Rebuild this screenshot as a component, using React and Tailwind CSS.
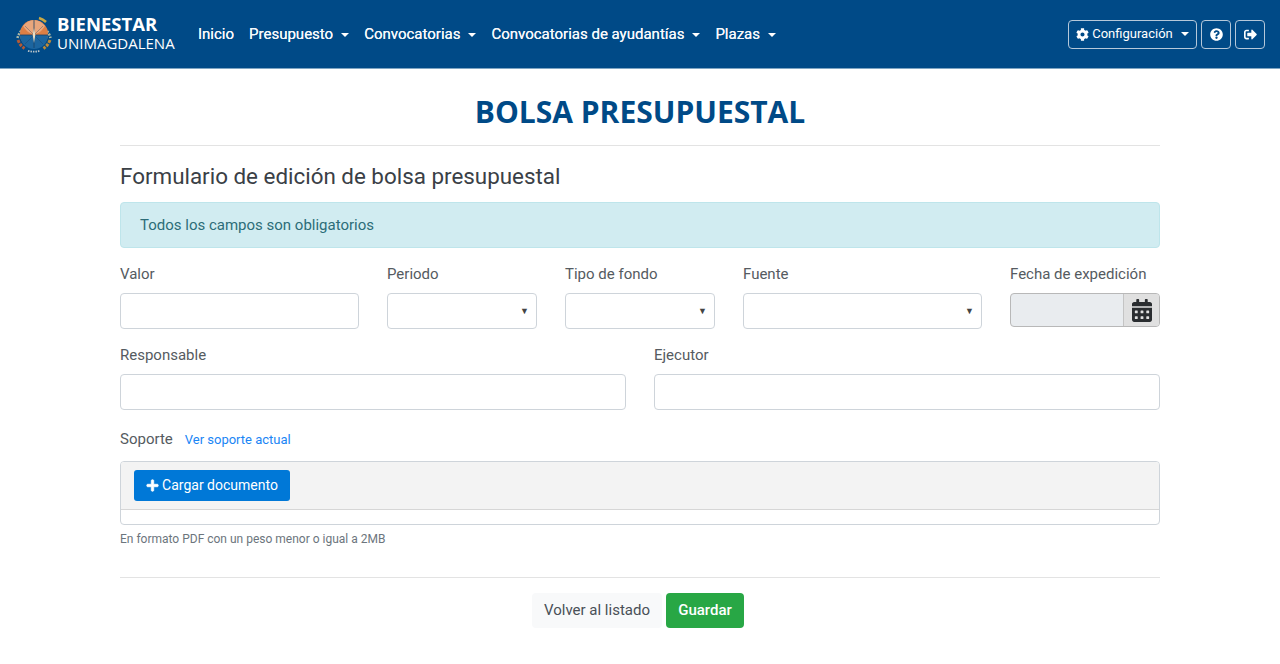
import React from "react";
import { FaCog, FaQuestionCircle, FaCalendarAlt, FaPlus, FaSignOutAlt } from "react-icons/fa";

function Logo() {
  return (
    <svg width="38" height="38" viewBox="0 0 38 38" className="shrink-0">
      <path d="M2.500 23A17 17 0 0 1 35.500 23" fill="none" stroke="#a9b5a4" strokeWidth="2.600" strokeDasharray="2 1.100" />
      <path d="M24 3a17 17 0 0 1 7 4" fill="none" stroke="#c9a843" strokeWidth="2.600" />
      <circle cx="19" cy="19" r="14" fill="#dd7f45" />
      <path d="M8 11c3-4 7-6 11-6s8 2 11 6c-3 5-7 8-11 8s-8-3-11-8z" fill="#e9a67c" />
      <path d="M5 20a14 14 0 0 0 28 0z" fill="#1c659f" />
      <path d="M5 20h28M19 5v28" stroke="#1b3f63" strokeWidth="0.800" />
      <path d="M10 11l18 18M28 11L10 29" stroke="#1b3f63" strokeWidth="0.500" opacity="0.700" />
      <path d="M19 13l1.300 7L19 28l-1.300-8z" fill="#eadfc5" />
      <path d="M3 25c1.500 4 3.500 6.500 6.500 8.500" stroke="#b55a34" strokeWidth="3" fill="none" strokeDasharray="3 1.200" />
      <path d="M35 25c-1.500 4-3.500 6.500-6.500 8.500" stroke="#c08a35" strokeWidth="3" fill="none" strokeDasharray="3 1.200" />
      <path d="M13 35.800c4 1.200 8 1.200 12 0" stroke="#b9c4c9" strokeWidth="1.800" fill="none" strokeDasharray="1.500 1" />
    </svg>
  );
}

function Caret() {
  return <span className="ml-[8px] inline-block w-0 h-0 border-x-[4.500px] border-x-transparent border-t-[4.500px] border-t-white" />;
}

function NavItem({ children, caret }) {
  return (
    <a className="flex items-center text-[#f6f8fb] text-[15px] font-normal [text-shadow:0_0_0.4px_#fff] whitespace-nowrap mt-[1px]">
      {children}
      {caret && <Caret />}
    </a>
  );
}

function Field({ label, children }) {
  return (
    <div className="flex flex-col min-w-0">
      <label className="text-[15px] leading-[22px] text-[#555b61] mb-[8px]">{label}</label>
      {children}
    </div>
  );
}

function Input() {
  return <div className="h-[36px] bg-white border border-[#ced4da] rounded-[4px]" />;
}

function Select() {
  return (
    <div className="h-[36px] bg-white border border-[#ced4da] rounded-[4px] flex items-center justify-end pr-[7px]">
      <span className="text-[9px] leading-none text-[#444]">▼</span>
    </div>
  );
}

export default function App() {
  return (
    <div className="min-h-[664px] bg-white font-['Roboto',sans-serif] text-[#495057]">
      <nav className="h-[69px] bg-[#004a87] flex items-center pl-[15px] pr-[15px] border-b border-[#7fa5c3]">
        <div className="flex items-center gap-[4px] w-[161px]">
          <Logo />
          <div className="flex flex-col text-white font-['Open_Sans',sans-serif] mt-[-1px]">
            <span className="text-[18.500px] leading-[20px] font-bold">BIENESTAR</span>
            <span className="text-[15px] leading-[19px]">UNIMAGDALENA</span>
          </div>
        </div>
        <div className="flex items-center gap-[15px] ml-[22px]">
          <NavItem>Inicio</NavItem>
          <NavItem caret>Presupuesto</NavItem>
          <NavItem caret>Convocatorias</NavItem>
          <NavItem caret>Convocatorias de ayudantías</NavItem>
          <NavItem caret>Plazas</NavItem>
        </div>
        <div className="ml-auto flex items-center gap-[4px] text-white">
          <button className="h-[29px] w-[129px] border border-[#b5c8da] rounded-[4px] flex items-center justify-center text-[13px]">
            <FaCog className="w-[13px] h-[13px] mr-[3px]" />
            Configuración
            <Caret />
          </button>
          <button className="h-[29px] w-[30px] border border-[#b5c8da] rounded-[4px] flex items-center justify-center">
            <FaQuestionCircle className="w-[13px] h-[13px]" />
          </button>
          <button className="h-[29px] w-[30px] border border-[#b5c8da] rounded-[4px] flex items-center justify-center">
            <FaSignOutAlt className="w-[13px] h-[13px]" />
          </button>
        </div>
      </nav>

      <main className="w-[1040px] mx-auto">
        <h1 className="text-center font-['Open_Sans',sans-serif] font-bold text-[30px] leading-[40px] text-[#004a87] pt-[23px] h-[77px] border-b border-[#e3e3e3] box-border">
          BOLSA PRESUPUESTAL
        </h1>
        <h2 className="text-[22.400px] leading-[27px] text-[#3a4046] mt-[17px]">Formulario de edición de bolsa presupuestal</h2>
        <div className="mt-[12px] h-[46px] bg-[#d1ecf1] border border-[#bee5eb] rounded-[4px] px-[19px] flex items-center text-[15px] text-[#2c6c78]">
          Todos los campos son obligatorios
        </div>

        <div className="grid grid-cols-[239px_150px_150px_239px_150px] gap-x-[28px] mt-[15px]">
          <Field label="Valor"><Input /></Field>
          <Field label="Periodo"><Select /></Field>
          <Field label="Tipo de fondo"><Select /></Field>
          <Field label="Fuente"><Select /></Field>
          <Field label="Fecha de expedición">
            <div className="h-[34px] flex border border-[#b8b8b8] rounded-[4px] bg-[#e9ecef] overflow-hidden">
              <div className="flex-1" />
              <div className="w-[36px] bg-[#e0e0e0] border-l border-[#c4c4c4] flex items-center justify-center">
                <FaCalendarAlt className="w-[20px] h-[23px] text-[#2a2d30]" />
              </div>
            </div>
          </Field>
        </div>

        <div className="grid grid-cols-2 gap-x-[28px] mt-[15px]">
          <Field label="Responsable"><Input /></Field>
          <Field label="Ejecutor"><Input /></Field>
        </div>

        <div className="mt-[18px] flex items-baseline text-[15px] leading-[22px] text-[#555b61]">
          <span>Soporte</span>
          <a className="ml-[12px] text-[13px] text-[#1a85f5]">Ver soporte actual</a>
        </div>
        <div className="mt-[10px] h-[64px] border border-[#ced4da] rounded-[4px] overflow-hidden flex flex-col">
          <div className="h-[48px] bg-[#f3f3f3] border-b border-[#d6d6d6] pl-[13px] pt-[8px]">
            <button className="h-[31px] w-[156px] bg-[#0078d7] rounded-[3px] text-white text-[14px] flex items-center justify-center">
              <FaPlus className="w-[13px] h-[13px] mr-[3px]" stroke="currentColor" strokeWidth={30} />
              Cargar documento
            </button>
          </div>
        </div>
        <p className="mt-[6px] text-[12px] leading-[16px] text-[#6c757d]">En formato PDF con un peso menor o igual a 2MB</p>

        <div className="mt-[30px] border-t border-[#e3e3e3] pt-[15px] pr-[4px] flex justify-center gap-[4px]">
          <button className="h-[35px] w-[130px] bg-[#f8f9fa] rounded-[4px] text-[15px] text-[#495057]">Volver al listado</button>
          <button className="h-[35px] w-[78px] bg-[#28a745] rounded-[4px] text-[15px] font-medium text-white">Guardar</button>
        </div>
      </main>
    </div>
  );
}
